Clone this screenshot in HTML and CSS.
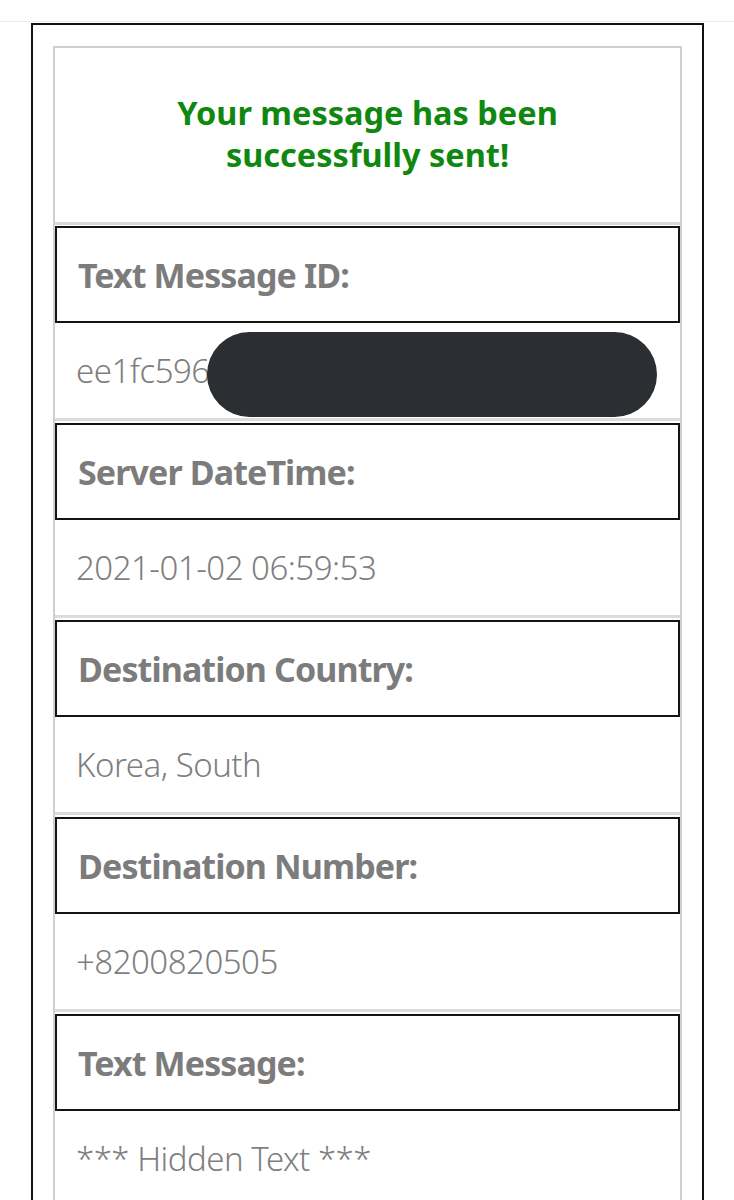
FILE: index.html
```html
<!DOCTYPE html>
<html lang="en">
<head>
<meta charset="utf-8">
<title>Message sent</title>
<link rel="stylesheet" href="styles.css">
</head>
<body>
<div class="topbar"></div>
<div class="frame">
  <div class="panel">
    <div class="notice">Your message has been<br>successfully sent!</div>
    <div class="label">Text Message ID:</div>
    <div class="value redacted-row">ee1fc596<span class="redaction"></span></div>
    <div class="label">Server DateTime:</div>
    <div class="value">2021-01-02 06:59:53</div>
    <div class="label">Destination Country:</div>
    <div class="value">Korea, South</div>
    <div class="label">Destination Number:</div>
    <div class="value">+8200820505</div>
    <div class="label">Text Message:</div>
    <div class="value">*** Hidden Text ***</div>
  </div>
</div>
</body>
</html>
```
FILE: styles.css
```css
html, body {
  margin: 0;
  padding: 0;
  background: #ffffff;
}
body {
  font-family: "Noto Sans", "Open Sans", sans-serif;
  height: 1200px;
  overflow: hidden;
}
.topbar {
  height: 21px;
  border-bottom: 1px solid #ececec;
}
.frame {
  margin: 1px 0 0 31px;
  width: 673px;
  box-sizing: border-box;
  border: 2px solid #111;
  border-bottom: none;
  padding: 21px 20px 0 20px;
  min-height: 1200px;
}
.panel {
  border: 2px solid #cfcfcf;
  border-bottom: none;
  min-height: 1200px;
}
.notice {
  color: #108810;
  font-weight: 700;
  font-size: 32.5px;
  line-height: 42px;
  text-align: center;
  padding: 44px 0 46px;
  border-bottom: 3px solid #d9d9d9;
  margin-bottom: 1px;
}
.label {
  height: 93px;
  border: 2px solid #141414;
  display: flex;
  align-items: center;
  padding-left: 21px;
  color: #7c7c7c;
  font-weight: 700;
  font-size: 34px;
  letter-spacing: -0.9px;
}
.value {
  height: 95px;
  border-bottom: 3px solid #dcdcdc;
  margin-bottom: 2px;
  display: flex;
  align-items: center;
  padding-left: 21px;
  color: #7f7f7f;
  font-weight: 300;
  font-size: 33px;
  letter-spacing: -0.5px;
}
.redacted-row {
  position: relative;
}
.redaction {
  position: absolute;
  left: 152px;
  top: 9px;
  width: 450px;
  height: 85px;
  border-radius: 43px;
  background: #2b2f33;
}
```
